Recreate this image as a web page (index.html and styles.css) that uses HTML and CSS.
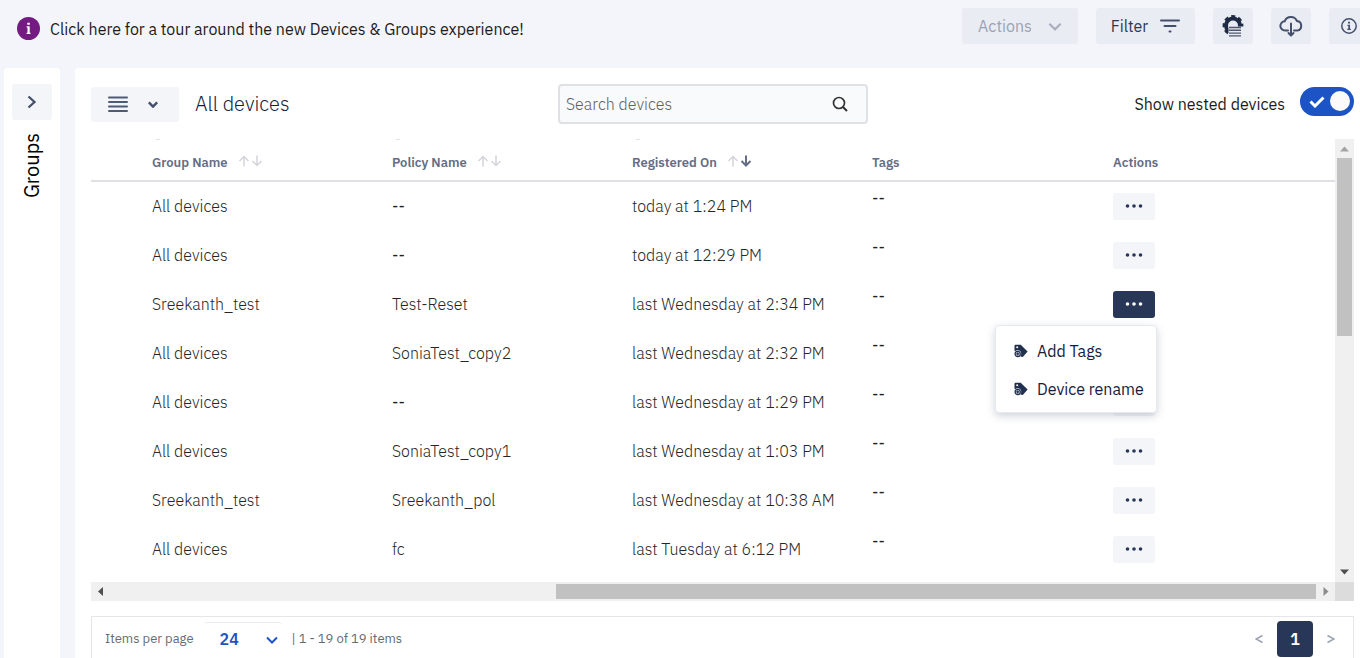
FILE: index.html
```html
<!DOCTYPE html>
<html lang="en">
<head>
<meta charset="utf-8">
<title>Devices &amp; Groups</title>
<link rel="stylesheet" href="styles.css">
</head>
<body>
<svg class="defs" aria-hidden="true">
  <symbol id="up" viewBox="0 0 12 12"><path d="M6 11.5V1.5M1.5 6 6 1.5 10.500 6"/></symbol>
  <symbol id="down" viewBox="0 0 12 12"><path d="M6 .5v10M1.500 6 6 10.500 10.500 6"/></symbol>
  <symbol id="chevron" viewBox="0 0 12 8"><path d="M1 1.500 6 6.500 11 1.500"/></symbol>
  <symbol id="dots" viewBox="0 0 18 4"><circle cx="2.500" cy="2" r="1.800"/><circle cx="9" cy="2" r="1.800"/><circle cx="15.500" cy="2" r="1.800"/></symbol>
  <symbol id="tag" viewBox="0 0 14 14">
    <path fill="#22304f" d="M.5 1.700Q.5.800 1.500.800h5.200L13.600 7.500 8.800 13 6.500 12.500.5 6.500z"/>
    <circle cx="3.200" cy="3.200" r="1" fill="#fff"/>
    <circle cx="3.700" cy="9.700" r="3.500" fill="#fff"/>
    <circle cx="3.700" cy="9.900" r="2.600" fill="#fff" stroke="#22304f" stroke-width="1.300"/>
    <path stroke="#22304f" stroke-width="1.200" d="M3.700 8.300v3.200M2.100 9.900h3.200"/>
  </symbol>
</svg>

<header class="topbar">
  <a class="tour" href="#">
    <svg class="tour-icon" viewBox="0 0 23 23"><circle cx="11.500" cy="11.500" r="11.500" fill="#741b82"/><path fill="#fff" d="M10.300 5.700h2.500v2.100h-2.500zM9.600 9.200h3.100v6.500h.8V17H9.600v-1.300h.9v-5.200h-.9z"/></svg>
    <span>Click here for a tour around the new Devices &amp; Groups experience!</span>
  </a>
  <div class="tools">
    <button class="tool tool-actions" disabled>Actions <svg class="tool-chevron"><use href="#chevron"/></svg></button>
    <button class="tool tool-filter">Filter
      <svg width="20" height="16" viewBox="0 0 20 16"><path fill="none" stroke="#44506b" stroke-width="2" stroke-linecap="round" d="M1 2.500h18M4.500 8h11M9.500 13.500h1"/></svg>
    </button>
    <button class="tool tool-icon" aria-label="Settings list">
      <svg width="22" height="22" viewBox="0 0 22 22"><circle cx="11" cy="10.500" r="7" fill="none" stroke="#1f2a44" stroke-width="4"/><circle cx="11" cy="10.500" r="9.200" fill="none" stroke="#1f2a44" stroke-width="2.400" stroke-dasharray="4.200 3.025" stroke-dashoffset="2.100"/><path fill="#eaecf3" d="M6.500 11.500H22V22H6.500z"/><path stroke="#4d566c" stroke-width="1.400" d="M7 12.500h12M7 15.300h12M7 18.100h12M7 20.900h12"/></svg>
    </button>
    <button class="tool tool-icon" aria-label="Download">
      <svg width="24" height="22" viewBox="0 0 24 22"><path fill="none" stroke="#44506b" stroke-width="2" stroke-linecap="round" stroke-linejoin="round" d="M9 15.500H6.200a4.600 4.600 0 0 1-.5-9.200A6.600 6.600 0 0 1 18 6a4.800 4.800 0 0 1 .2 9.500H15M12 8.500V20M9.500 18l2.500 2.500 2.500-2.500"/></svg>
    </button>
    <button class="tool tool-icon" aria-label="Information">
      <svg width="18" height="18" viewBox="0 0 18 18"><circle cx="9" cy="9" r="7.200" fill="none" stroke="#44506b" stroke-width="1.500"/><path fill="#44506b" d="M8 4.700h2v1.800H8zM7.500 7.700H10v4h.8v1.300H7.300v-1.300h1V9h-.8z"/></svg>
    </button>
  </div>
</header>

<div class="workspace">
  <aside class="groups">
    <button class="expand" aria-label="Expand groups"><svg width="10" height="14" viewBox="0 0 10 14"><path fill="none" stroke="#44506b" stroke-width="2.300" d="m1.500 1.500 6 5.500-6 5.500"/></svg></button>
    <span class="groups-label">Groups</span>
  </aside>

  <main class="devices">
    <div class="devices-head">
      <div class="devices-title">
        <button class="view" aria-label="List view">
          <svg width="20" height="17" viewBox="0 0 20 17"><path stroke="#4c5b78" stroke-width="2" stroke-linecap="round" d="M1 1.500h18M1 6h18M1 10.500h18M1 15h18"/></svg>
          <svg class="view-chevron"><use href="#chevron"/></svg>
        </button>
        <h1>All devices</h1>
      </div>
      <div class="search">
        <input type="text" placeholder="Search devices" aria-label="Search devices">
        <svg width="16" height="16" viewBox="0 0 16 16"><circle cx="7" cy="7" r="5.500" fill="none" stroke="#333" stroke-width="1.700"/><path stroke="#333" stroke-width="2" d="m10.700 10.700 4.300 4.300"/></svg>
      </div>
      <label class="nested">Show nested devices
        <span class="switch"><input type="checkbox" checked><svg class="switch-mark" viewBox="0 0 16 12"><path d="m1.500 5.500 4.500 4.500L14.500 1.500"/></svg></span>
      </label>
    </div>

    <div class="scroller">
      <div class="viewport">
        <table>
          <thead>
            <tr>
              <th class="col-group">Group Name <svg class="sort"><use href="#up"/></svg><svg class="sort"><use href="#down"/></svg></th>
              <th class="col">Policy Name <svg class="sort"><use href="#up"/></svg><svg class="sort"><use href="#down"/></svg></th>
              <th class="col">Registered On <svg class="sort"><use href="#up"/></svg><svg class="sort sort-on"><use href="#down"/></svg></th>
              <th class="col plain">Tags</th>
              <th class="plain">Actions</th>
            </tr>
          </thead>
          <tbody>
            <tr><td>All devices</td><td class="empty">--</td><td>today at 1:24 PM</td><td class="tags">--</td><td><button class="more" aria-label="Row actions"><svg><use href="#dots"/></svg></button></td></tr>
            <tr><td>All devices</td><td class="empty">--</td><td>today at 12:29 PM</td><td class="tags">--</td><td><button class="more" aria-label="Row actions"><svg><use href="#dots"/></svg></button></td></tr>
            <tr><td>Sreekanth_test</td><td>Test-Reset</td><td>last Wednesday at 2:34 PM</td><td class="tags">--</td><td>
              <div class="more-wrap">
                <button class="more more-open" aria-label="Row actions" aria-expanded="true"><svg><use href="#dots"/></svg></button>
                <div class="menu">
                  <button><svg><use href="#tag"/></svg>Add Tags</button>
                  <button><svg><use href="#tag"/></svg>Device rename</button>
                </div>
              </div></td></tr>
            <tr><td>All devices</td><td>SoniaTest_copy2</td><td>last Wednesday at 2:32 PM</td><td class="tags">--</td><td><button class="more" aria-label="Row actions"><svg><use href="#dots"/></svg></button></td></tr>
            <tr><td>All devices</td><td class="empty">--</td><td>last Wednesday at 1:29 PM</td><td class="tags">--</td><td><button class="more" aria-label="Row actions"><svg><use href="#dots"/></svg></button></td></tr>
            <tr><td>All devices</td><td>SoniaTest_copy1</td><td>last Wednesday at 1:03 PM</td><td class="tags">--</td><td><button class="more" aria-label="Row actions"><svg><use href="#dots"/></svg></button></td></tr>
            <tr><td>Sreekanth_test</td><td>Sreekanth_pol</td><td>last Wednesday at 10:38 AM</td><td class="tags">--</td><td><button class="more" aria-label="Row actions"><svg><use href="#dots"/></svg></button></td></tr>
            <tr><td>All devices</td><td>fc</td><td>last Tuesday at 6:12 PM</td><td class="tags">--</td><td><button class="more" aria-label="Row actions"><svg><use href="#dots"/></svg></button></td></tr>
          </tbody>
        </table>
      </div>
      <div class="bar-v">
        <svg viewBox="0 0 19 19"><path fill="#a3a3a3" d="m5 12.500 4.500-5 4.500 5z"/></svg>
        <div class="track-v"><div class="thumb-v"></div></div>
        <svg viewBox="0 0 19 19"><path fill="#505050" d="M5 6.500h9l-4.500 5z"/></svg>
      </div>
      <div class="bar-h">
        <svg viewBox="0 0 19 19"><path fill="#505050" d="m12 5v9L7 9.500z"/></svg>
        <div class="track-h"><div class="thumb-h"></div></div>
        <svg viewBox="0 0 19 19"><path fill="#8c8c8c" d="m7.500 5v9l5-4.500z"/></svg>
      </div>
      <div class="corner"></div>
    </div>

    <footer class="pager">
      <label for="size">Items per page</label>
      <div class="size">
        <select id="size"><option>24</option></select>
        <svg class="size-chevron"><use href="#chevron"/></svg>
      </div>
      <span>| 1 - 19 of 19 items</span>
      <nav class="pages">
        <button class="step" aria-label="Previous page"><svg width="8" height="10" viewBox="0 0 8 10"><path d="M7.500 1.500 1 5l6.500 3.500"/></svg></button>
        <button class="page">1</button>
        <button class="step" aria-label="Next page"><svg width="8" height="10" viewBox="0 0 8 10"><path d="M.5 1.500 7 5 .5 8.500"/></svg></button>
      </nav>
    </footer>
  </main>
</div>
</body>
</html>
```
FILE: styles.css
```css
* { box-sizing: border-box; }
body {
  margin: 0;
  height: 100vh;
  overflow: hidden;
  display: flex;
  flex-direction: column;
  background: #f4f5fb;
  color: #262626;
  font: 16px/20px "IBM Plex Sans", Roboto, "Liberation Sans", sans-serif;
}
button, input, select { font: inherit; color: inherit; border: 0; }
button { padding: 0; cursor: pointer; display: flex; align-items: center; justify-content: center; }
.defs { position: absolute; width: 0; height: 0; }
svg { flex: none; }
use { fill: none; }

.topbar { height: 68px; flex: none; display: flex; justify-content: space-between; padding: 8px 0 0 17px; }
.tour { display: flex; gap: 10px; height: 40px; align-items: center; color: #1c1c1c; text-decoration: none; }
.tour span { padding-top: 2px; }
.tour-icon { width: 23px; height: 23px; }
.tools { display: flex; gap: 18px; margin-right: -9px; }
.tool { height: 36px; border-radius: 3px; background: #eaecf3; color: #2c3856; }
.tool-actions { width: 116px; gap: 16px; color: #9aa2b1; }
.tool-chevron { width: 14px; height: 9px; stroke: #aab0bd; stroke-width: 2; }
.tool-filter { width: 99px; gap: 12px; }
.tool-icon { width: 40px; }

.workspace { flex: 1; min-height: 0; display: flex; gap: 15px; padding-left: 4px; }
.groups { width: 56px; padding-top: 16px; background: #fff; border-radius: 4px 4px 0 0; display: flex; flex-direction: column; align-items: center; gap: 13px; }
.expand { width: 40px; height: 36px; border-radius: 3px; background: #f4f5f8; }
.groups-label { writing-mode: vertical-rl; transform: rotate(180deg); color: #000; font-size: 20px; }
.devices { flex: 1; min-width: 0; padding: 16px 6px 0 16px; background: #fff; border-radius: 4px 0 0 0; }

.devices-head { display: grid; grid-template-columns: 467fr 310fr 486fr; align-items: center; height: 40px; }
.devices-title { display: flex; align-items: center; gap: 16px; }
.view { width: 88px; height: 35px; padding-right: 5px; gap: 20px; border-radius: 3px; background: #f4f5f8; }
.view-chevron { width: 10px; height: 7px; stroke: #44506b; stroke-width: 3; }
h1 { margin: 0; color: #14203e; font-size: 20px; font-weight: 300; line-height: 24px; }
.search { display: flex; align-items: center; height: 40px; padding-right: 18px; border: 2px solid #e0e1e7; border-radius: 4px; background: #f9fafc; }
.search input { flex: 1; min-width: 0; padding: 0 6px; background: none; outline: 0; font-weight: 300; }
.search input::placeholder { color: #606060; opacity: 1; }
.nested { display: flex; align-items: center; justify-content: flex-end; gap: 15px; color: #1c1c1c; }
.switch { position: relative; display: flex; margin-bottom: 6px; }
.switch input { appearance: none; margin: 0; padding: 4px; display: flex; justify-content: flex-end; align-items: center; width: 54px; height: 29px; border-radius: 15px; background: #1c54c5; }
.switch input::after { content: ""; width: 20px; height: 20px; border-radius: 50%; background: #fafafa; }
.switch-mark { position: absolute; left: 9px; top: 9px; width: 16px; height: 12px; fill: none; stroke: #fff; stroke-width: 3; }

.scroller { display: grid; grid-template-columns: 1fr 19px; margin-top: 15px; }
.viewport { height: 443px; min-width: 0; }
table { width: 100%; table-layout: fixed; border-collapse: separate; border-spacing: 0; }
th { position: relative; height: 43px; padding: 6px 0 0; border-bottom: 2px solid #dfdfe5; color: #646d84; font-size: 13px; font-weight: 600; text-align: left; white-space: nowrap; }
th::before { content: ""; position: absolute; top: 0; margin-left: 4px; width: 4px; height: 1px; background: #e3e4e8; }
th.plain::before { display: none; }
.col-group { width: 301px; }
.col { width: 240px; }
th:first-child, td:first-child { padding-left: 61px; }
th:last-child, td:last-child { padding-left: 1px; }
.sort { width: 12px; height: 12px; margin-left: 1px; stroke: #d3d5db; stroke-width: 1.5; }
.sort:first-of-type { margin-left: 7px; }
.sort-on { stroke: #646f87; stroke-width: 2; }
td { height: 49px; padding: 0 0 1px; font-weight: 300; white-space: nowrap; }
.empty { color: #222; font-weight: 400; }
td.tags { vertical-align: top; padding-top: 6px; color: #222; font-weight: 400; }
.more { width: 42px; height: 27px; border-radius: 3px; background: #f4f5f8; }
.more svg { width: 18px; height: 4px; }
.more use { fill: #28365a; }
.more-open { background: #283757; }
.more-open use { fill: #fff; }
.more-wrap { position: relative; width: 42px; }
.menu { position: absolute; z-index: 1; top: 34px; right: -2px; width: 162px; padding: 6px 0 4px; border: 1px solid #e6e8ee; border-radius: 4px; background: #fff; box-shadow: 0 3px 8px rgba(40, 55, 90, .22); }
.menu button { width: 100%; height: 38px; padding-left: 18px; gap: 9px; justify-content: flex-start; background: none; color: #14203e; font-weight: 400; }
.menu svg { width: 14px; height: 14px; }

.bar-v { display: flex; flex-direction: column; background: #f0f0f0; }
.track-v { flex: 1; padding: 0 2px; }
.thumb-v { height: 44%; background: #c1c1c1; }
.bar-h { display: flex; height: 19px; background: #f0f0f0; }
.track-h { flex: 1; padding: 2px 0; display: flex; justify-content: flex-end; }
.thumb-h { width: 63%; background: #c1c1c1; }
.bar-v svg, .bar-h svg { width: 19px; height: 19px; }
.corner { background: #dcdcdc; }

.pager { display: flex; align-items: center; height: 44px; margin-top: 15px; padding: 0 18px 0 13px; border: 1px solid #e6e6ea; border-bottom: 0; color: #666a73; font-size: 13px; }
.size { position: relative; width: 78px; margin: 0 10px; }
.size select { appearance: none; width: 100%; height: 34px; padding: 0 16px; border-top: 1px solid #ececf0; border-radius: 4px 4px 0 0; background: #fff; color: #1c54c5; font-size: 16px; font-weight: 600; }
.size-chevron { position: absolute; right: 4px; top: 14px; width: 12px; height: 8px; stroke: #1c54c5; stroke-width: 2; pointer-events: none; }
.pages { display: flex; align-items: center; gap: 14px; margin-left: auto; }
.step { background: none; width: 8px; height: 20px; }
.step svg { fill: none; stroke: #9aa2b1; stroke-width: 1.5; }
.page { width: 36px; height: 36px; border-radius: 4px; background: #283757; color: #fff; font-size: 16px; font-weight: 600; }
```
